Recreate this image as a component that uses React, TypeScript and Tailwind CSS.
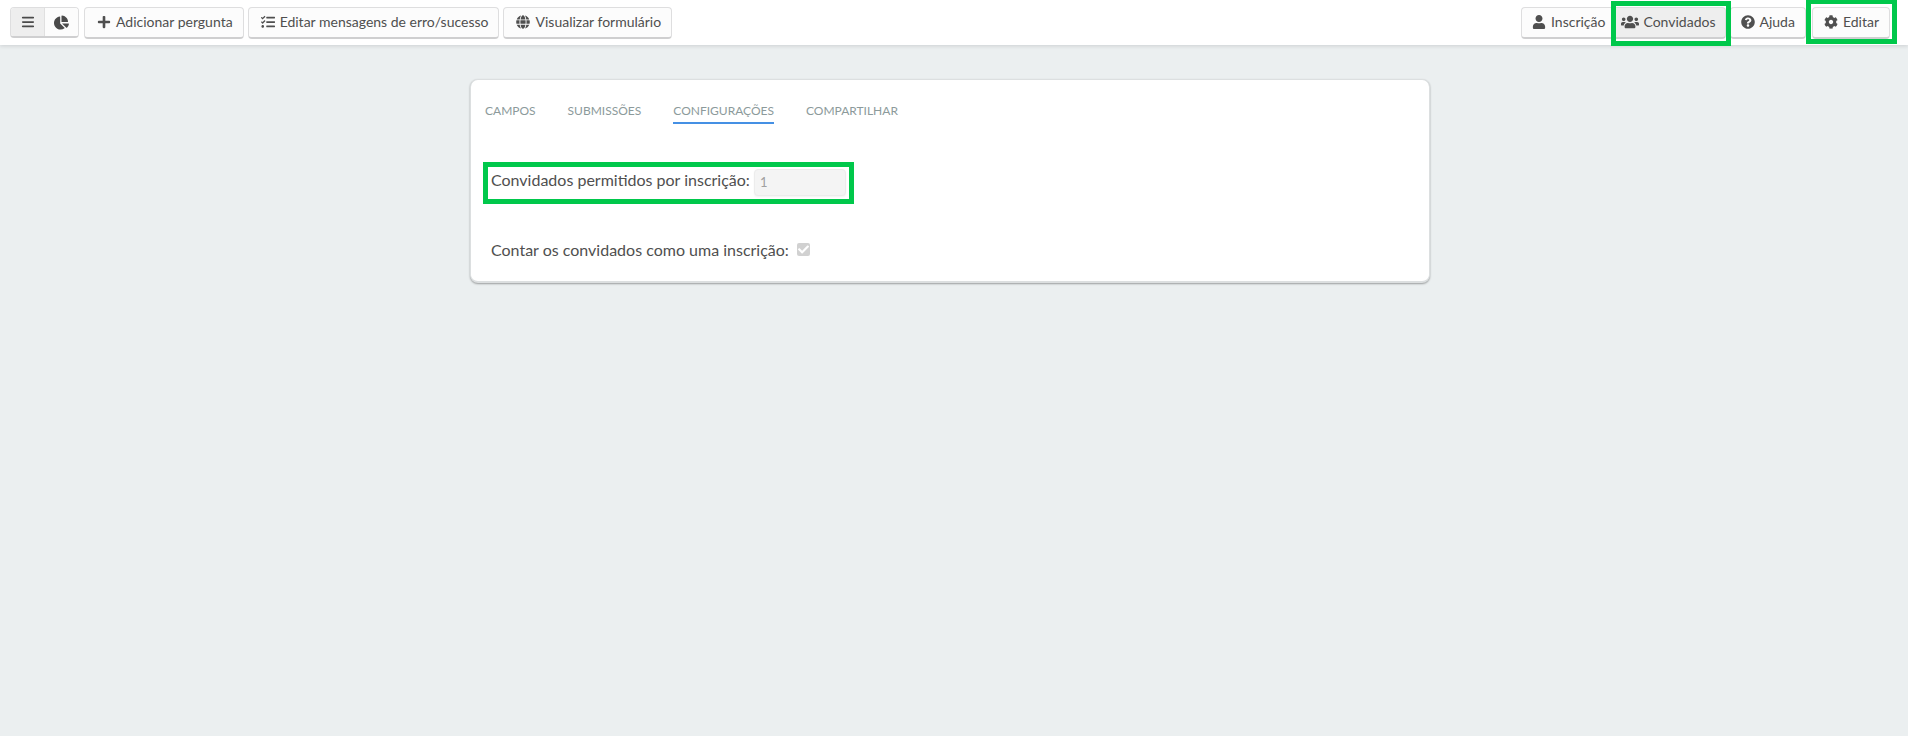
import type { ReactNode } from "react";
import { clsx } from "clsx";
import { FaChartPie, FaCheck, FaCog, FaGlobe, FaPlus, FaQuestionCircle, FaTasks, FaUser, FaUsers } from "react-icons/fa";
import { FaBars } from "react-icons/fa6";

const tabs = ["Campos", "Submissões", "Configurações", "Compartilhar"];

const buttonBase =
  "flex h-8 items-center whitespace-nowrap border border-[#dededf] border-b-2 border-b-[#cfcfd0] pb-[2px] text-sm text-[#4f4f4f]";

const Highlight = ({ className }: { className: string }) => (
  <span className={clsx("pointer-events-none absolute border-5 border-[#00c84b]", className)} />
);

const ToolbarButton = ({ icon, children, className }: { icon: ReactNode; children: ReactNode; className?: string }) => (
  <button type="button" className={clsx(buttonBase, className ?? "gap-[5px] rounded bg-[#fcfcfc] pr-[10px] pl-3")}>
    {icon}
    {children}
  </button>
);

const Toolbar = () => (
  <header className="relative flex h-[45px] items-start justify-between bg-white pt-[7px] pr-[18px] pl-[10px] shadow-[0_1px_4px_rgba(34,36,38,0.15)]">
    <div className="flex gap-1">
      <div className="mr-px flex h-[31px] overflow-hidden rounded border border-b-2 border-[#dededf] border-b-[#cfcfd0]">
        <button type="button" aria-label="Lista" className="flex w-[34px] items-center justify-center border-r border-[#e0e0e0] bg-[#eeeeee] text-[#4a4a4a]">
          <FaBars className="size-[14px]" />
        </button>
        <button type="button" aria-label="Gráficos" className="flex w-[33px] items-center justify-center bg-[#fcfcfc] text-[#4a4a4a]">
          <FaChartPie className="size-[15px]" />
        </button>
      </div>
      <ToolbarButton icon={<FaPlus className="size-[14px]" />}>Adicionar pergunta</ToolbarButton>
      <ToolbarButton icon={<FaTasks className="size-[14px]" />}>Editar mensagens de erro/sucesso</ToolbarButton>
      <ToolbarButton icon={<FaGlobe className="size-[14px]" />}>Visualizar formulário</ToolbarButton>
    </div>
    <div className="flex">
      <ToolbarButton icon={<FaUser className="size-[14px]" />} className="gap-[5px] rounded-l border-r-0 bg-[#fcfcfc] pr-[6px] pl-[10px]">
        Inscrição
      </ToolbarButton>
      <div className="relative">
        <ToolbarButton icon={<FaUsers className="size-[18px]" />} className="gap-1 rounded-r bg-[#eeeeee] px-[9px]">
          Convidados
        </ToolbarButton>
        <Highlight className="-top-[6px] -right-[5px] -bottom-[7px] left-0" />
      </div>
      <ToolbarButton icon={<FaQuestionCircle className="size-[14px]" />} className="ml-1 gap-[5px] rounded bg-[#fcfcfc] px-[10px]">
        Ajuda
      </ToolbarButton>
      <div className="relative ml-[6px]">
        <ToolbarButton icon={<FaCog className="size-[14px]" />} className="gap-[5px] rounded bg-[#fcfcfc] pr-[10px] pl-[11px]">
          Editar
        </ToolbarButton>
        <Highlight className="-top-2 -right-[7px] -bottom-[5px] -left-[6px]" />
      </div>
    </div>
  </header>
);

export default function App() {
  return (
    <div className="flex min-h-screen flex-col bg-white pb-[6px] font-['Lato',sans-serif] text-[#4f4f4f]">
      <Toolbar />
      <main className="flex-1 bg-[#ebeff0] pt-[34px] pr-6 pl-4">
        <section className="mx-auto max-w-[960px] rounded-lg border border-b-2 border-[#dcdfe0] bg-white px-[14px] pb-5 shadow-[0_1px_2px_rgba(0,0,0,0.35)]">
          <nav className="flex gap-8 pt-[22px] text-xs">
            {tabs.map((tab) => (
              <a
                key={tab}
                href="#"
                className={clsx(
                  "border-b-2 pb-[2px] leading-[18px] text-[#8c9a9b] uppercase",
                  tab === "Configurações" ? "border-[#4590e4]" : "border-transparent",
                )}
              >
                {tab}
              </a>
            ))}
          </nav>
          <div className="relative mt-[45px] flex w-fit items-start gap-1 pr-2 pl-[6px]">
            <label htmlFor="guests" className="text-base leading-[22px]">
              Convidados permitidos por inscrição:
            </label>
            <input
              id="guests"
              type="text"
              defaultValue="1"
              disabled
              className="h-[27px] w-[92px] rounded border border-[#ececec] bg-[#f4f4f4] px-[5px] pb-[2px] text-[13px] text-[#a0a0a0] shadow-xs"
            />
            <Highlight className="-top-[7px] right-0 -bottom-2 -left-[2px]" />
          </div>
          <div className="mt-[43px] flex items-start gap-2 pl-[6px]">
            <label htmlFor="count" className="text-base leading-[22px]">
              Contar os convidados como uma inscrição:
            </label>
            <span className="relative mt-1 flex size-[13px]">
              <input id="count" type="checkbox" defaultChecked disabled className="size-[13px] appearance-none rounded-xs bg-[#d1d1d1]" />
              <FaCheck className="pointer-events-none absolute inset-px size-[11px] text-white" />
            </span>
          </div>
        </section>
      </main>
    </div>
  );
}
